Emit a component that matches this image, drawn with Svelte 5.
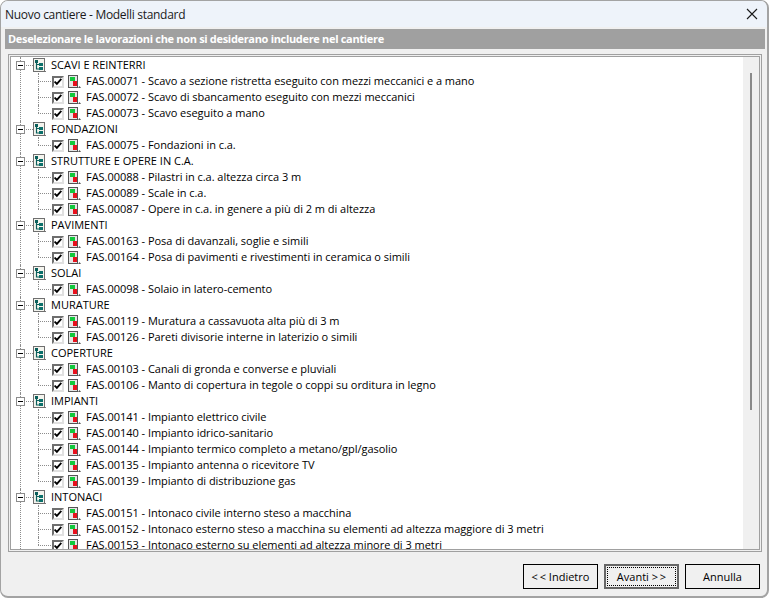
<script>
	const groups = [
		{ name: 'SCAVI E REINTERRI', items: ['FAS.00071 - Scavo a sezione ristretta eseguito con mezzi meccanici e a mano', 'FAS.00072 - Scavo di sbancamento eseguito con mezzi meccanici', 'FAS.00073 - Scavo eseguito a mano'] },
		{ name: 'FONDAZIONI', items: ['FAS.00075 - Fondazioni in c.a.'] },
		{ name: 'STRUTTURE E OPERE IN C.A.', items: ['FAS.00088 - Pilastri in c.a. altezza circa 3 m', 'FAS.00089 - Scale in c.a.', 'FAS.00087 - Opere in c.a. in genere a più di 2 m di altezza'] },
		{ name: 'PAVIMENTI', items: ['FAS.00163 - Posa di davanzali, soglie e simili', 'FAS.00164 - Posa di pavimenti e rivestimenti in ceramica o simili'] },
		{ name: 'SOLAI', items: ['FAS.00098 - Solaio in latero-cemento'] },
		{ name: 'MURATURE', items: ['FAS.00119 - Muratura a cassavuota alta più di 3 m', 'FAS.00126 - Pareti divisorie interne in laterizio o simili'] },
		{ name: 'COPERTURE', items: ['FAS.00103 - Canali di gronda e converse e pluviali', 'FAS.00106 - Manto di copertura in tegole o coppi su orditura in legno'] },
		{ name: 'IMPIANTI', items: ['FAS.00141 - Impianto elettrico civile', 'FAS.00140 - Impianto idrico-sanitario', 'FAS.00144 - Impianto termico completo a metano/gpl/gasolio', 'FAS.00135 - Impianto antenna o ricevitore TV', 'FAS.00139 - Impianto di distribuzione gas'] },
		{ name: 'INTONACI', items: ['FAS.00151 - Intonaco civile interno steso a macchina', 'FAS.00152 - Intonaco esterno steso a macchina su elementi ad altezza maggiore di 3 metri', 'FAS.00153 - Intonaco esterno su elementi ad altezza minore di 3 metri'] }
	];
</script>

<div class="window">
	<div class="titlebar">
		<span class="title">Nuovo cantiere - Modelli standard</span>
		<svg class="close" width="12" height="12" viewBox="0 0 12 12">
			<path d="M1 1L11 11M11 1L1 11" stroke="#1a1a1a" stroke-width="1.1" fill="none" />
		</svg>
	</div>
	<div class="content">
		<div class="banner">Deselezionare le lavorazioni che non si desiderano includere nel cantiere</div>
		<div class="frame">
			<div class="panel">
				<div class="tree">
					{#each groups as group}
						<div class="group">
							<div class="row parent">
								<span class="expander"><i></i></span>
								<svg class="folder" width="13" height="14" viewBox="0 0 13 14">
									<rect x="0.5" y="0.5" width="11" height="13" fill="#f4f4ee" stroke="#6f6f6f" />
									<path d="M3.5 2v9h5M3.5 6.5h5" stroke="#0b5f5c" stroke-width="1.2" fill="none" />
									<rect x="2" y="2" width="3" height="3" fill="#0b5f5c" />
									<rect x="6" y="5" width="4" height="3" fill="#0b6f6a" />
									<rect x="6" y="9" width="4" height="3" fill="#0b6f6a" />
									<path d="M12 13h1v1h-1z" fill="#777" />
								</svg>
								<span class="label">{group.name}</span>
							</div>
							{#each group.items as item}
								<div class="row child">
									<span class="check">
										<svg width="10" height="10" viewBox="0 0 10 10">
											<path d="M0.8 4.4L3.6 7.4L9.2 1.2" stroke="#000" stroke-width="2.3" fill="none" />
										</svg>
									</span>
									<svg class="task" width="14" height="14" viewBox="0 0 14 14">
										<rect x="0.5" y="0.5" width="9" height="12" fill="#e6e6e6" stroke="#555" />
										<rect x="2" y="2" width="5" height="4" fill="#12c83c" />
										<rect x="5" y="6" width="4" height="5" fill="#e8101c" />
										<path d="M10 13h3l-1.5 -2z" fill="#555" />
									</svg>
									<span class="label item">{item}</span>
								</div>
							{/each}
						</div>
					{/each}
				</div>
				<div class="scrollbar"><div class="thumb"></div></div>
			</div>
		</div>
	</div>
	<div class="footer">
		<button>&lt;&thinsp;&lt; Indietro</button>
		<button class="default"><span>Avanti &gt;&thinsp;&gt;</span></button>
		<button>Annulla</button>
	</div>
</div>

<style>
	:global(body) {
		margin: 0;
		background: #fff;
	}
	.window {
		width: 769px;
		height: 598px;
		box-sizing: border-box;
		display: flex;
		flex-direction: column;
		background: #f0f0f0;
		border: 1px solid #a3a3a3;
		border-right-width: 2px;
		border-bottom-width: 2px;
		border-radius: 8px;
		overflow: hidden;
		font-family: 'Open Sans', sans-serif;
		font-size: 11px;
		color: #000;
	}
	.titlebar {
		height: 26px;
		flex: none;
		display: flex;
		align-items: center;
		justify-content: space-between;
		padding: 0 9px 0 4px;
		background: #eef3fa;
	}
	.title {
		font-size: 12px;
		letter-spacing: -0.3px;
		color: #1a1a1a;
	}
	.content {
		flex: 1;
		min-height: 0;
		display: flex;
		flex-direction: column;
		padding: 2px 2px 0 4px;
	}
	.banner {
		height: 20px;
		flex: none;
		line-height: 20px;
		padding-left: 3px;
		background: #a0a0a0;
		color: #fff;
		font-weight: 700;
		letter-spacing: -0.32px;
	}
	.frame {
		margin: 5px 3px 0 3px;
		height: 498px;
		box-sizing: border-box;
		border: 1px solid #a0a0a0;
		padding: 1px;
		background: #f0f0f0;
	}
	.panel {
		height: 100%;
		box-sizing: border-box;
		display: flex;
		background: #fff;
		border: 1px solid #a0a0a0;
		overflow: hidden;
	}
	.tree {
		flex: 1;
		min-width: 0;
		overflow: hidden;
	}
	.scrollbar {
		width: 16px;
		flex: none;
		background: #f0f0f0;
		display: flex;
		justify-content: center;
		padding-top: 16px;
		box-sizing: border-box;
	}
	.thumb {
		width: 2px;
		height: 337px;
		background: #8a8a8a;
	}
	.group {
		position: relative;
	}
	.row {
		position: relative;
		height: 16px;
		display: flex;
		align-items: center;
		white-space: nowrap;
	}
	.label {
		line-height: 16px;
	}
	.item {
		letter-spacing: -0.03px;
	}
	.parent {
		padding-left: 5px;
	}
	/* tree connectors */
	.group::before {
		content: '';
		position: absolute;
		left: 9px;
		top: 0;
		bottom: 0;
		border-left: 1px dotted #8c8c8c;
	}
	.parent::after {
		content: '';
		position: absolute;
		left: 15px;
		width: 7px;
		top: 8px;
		border-top: 1px dotted #8c8c8c;
	}
	.child {
		padding-left: 41px;
	}
	.child::before {
		content: '';
		position: absolute;
		left: 27px;
		width: 13px;
		top: 8px;
		border-top: 1px dotted #8c8c8c;
	}
	.child::after {
		content: '';
		position: absolute;
		left: 27px;
		top: 0;
		height: 16px;
		border-left: 1px dotted #8c8c8c;
	}
	.child:last-child::after {
		height: 8px;
	}
	.expander {
		position: relative;
		z-index: 1;
		width: 9px;
		height: 9px;
		box-sizing: border-box;
		border: 1px solid #8c8c8c;
		background: #fff;
		display: flex;
		align-items: center;
		justify-content: center;
		flex: none;
	}
	.expander i {
		width: 5px;
		height: 1px;
		background: #000;
	}
	.folder {
		position: relative;
		z-index: 1;
		margin-left: 8px;
		margin-right: 5px;
		flex: none;
	}
	.check {
		position: relative;
		z-index: 1;
		width: 12px;
		height: 12px;
		margin-top: 2px;
		box-sizing: border-box;
		border: 2px solid;
		border-color: #6e6e6e #e0e0e0 #e0e0e0 #6e6e6e;
		background: #fff;
		display: flex;
		align-items: center;
		justify-content: center;
		flex: none;
	}
	.task {
		margin: 2px 4px 0;
		flex: none;
	}
	.footer {
		height: 45px;
		flex: none;
		display: flex;
		justify-content: flex-end;
		align-items: flex-start;
		gap: 6px;
		padding: 13px 7px 0 0;
		box-sizing: border-box;
	}
	button {
		width: 75px;
		height: 25px;
		box-sizing: border-box;
		border: 1px solid #000;
		background: #f0f0f0;
		padding: 0;
		font: inherit;
		color: #000;
	}
	.default {
		border: 2px solid #666;
		padding: 1px;
	}
	.default span {
		display: flex;
		height: 100%;
		align-items: center;
		justify-content: center;
		border: 1px dotted #000;
		box-sizing: border-box;
	}
</style>
